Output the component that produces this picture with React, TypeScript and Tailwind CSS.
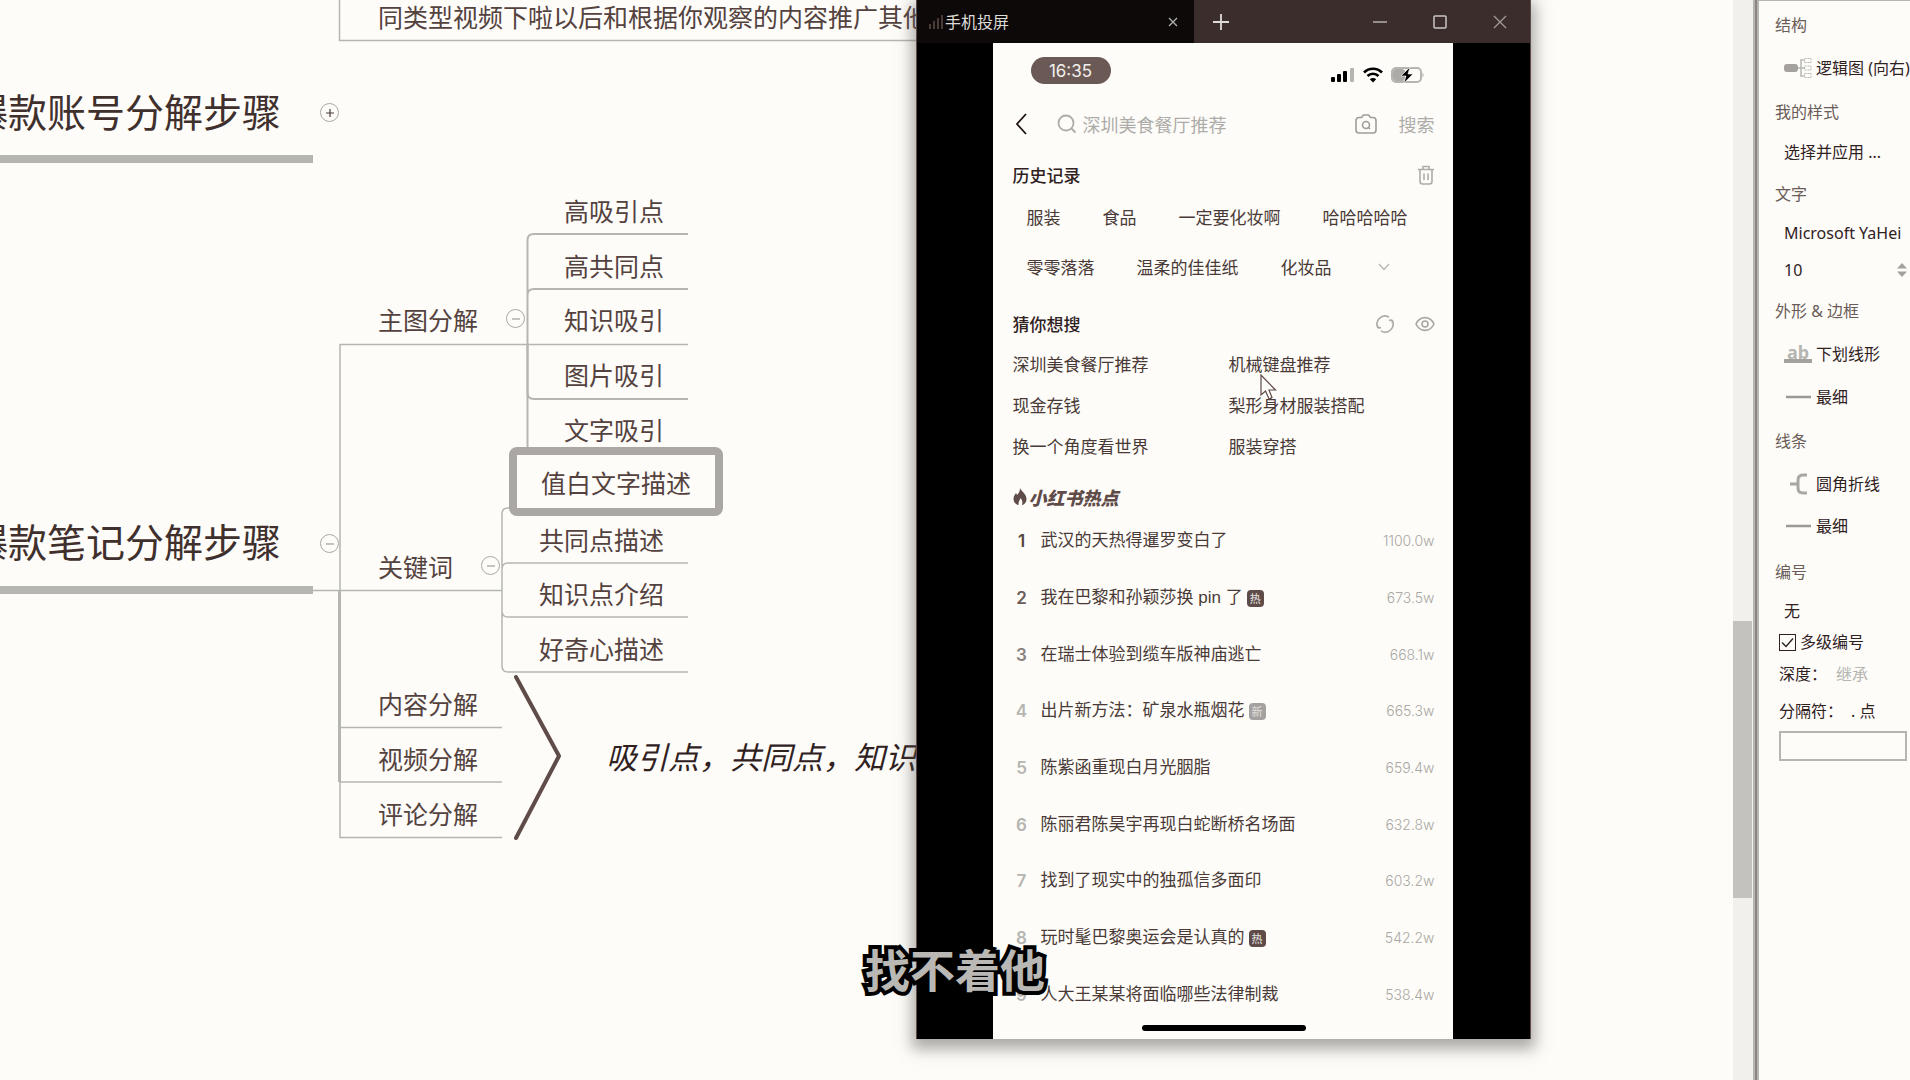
import React from "react";

type NodeItem = { text: string; pos: string };

const branchNodes: NodeItem[] = [
  { text: "主图分解", pos: "left-[378px] top-[302px]" },
  { text: "关键词", pos: "left-[378px] top-[549px]" },
  { text: "内容分解", pos: "left-[378px] top-[686px]" },
  { text: "视频分解", pos: "left-[378px] top-[741px]" },
  { text: "评论分解", pos: "left-[378px] top-[796px]" },
  { text: "高吸引点", pos: "left-[564px] top-[193px]" },
  { text: "高共同点", pos: "left-[564px] top-[248px]" },
  { text: "知识吸引", pos: "left-[564px] top-[302px]" },
  { text: "图片吸引", pos: "left-[564px] top-[357px]" },
  { text: "文字吸引", pos: "left-[564px] top-[412px]" },
  { text: "共同点描述", pos: "left-[539px] top-[522px]" },
  { text: "知识点介绍", pos: "left-[539px] top-[576px]" },
  { text: "好奇心描述", pos: "left-[539px] top-[631px]" },
];

function Toggle({ pos, open }: { pos: string; open: boolean }) {
  return (
    <button
      aria-label={open ? "收起" : "展开"}
      className={`absolute ${pos} flex size-[19px] items-center justify-center rounded-full border border-[#a9a8a5] bg-[#fdfcf8]`}
    >
      <svg viewBox="0 0 10 10" className="size-[10px]" stroke={open ? "#a09c99" : "#4a3a38"} strokeWidth="1.2">
        <path d={open ? "M1 5H9" : "M1 5H9M5 1V9"} />
      </svg>
    </button>
  );
}

function MindMap() {
  return (
    <div className="absolute inset-0 text-[25px] leading-[34px] whitespace-nowrap text-[#54423f]">
      <svg className="absolute left-0 top-0 h-[880px] w-[930px]" fill="none" stroke="#b5b5b2" strokeWidth="2">
        <path d="M339.500 0V40.500H930" strokeWidth="1.500" />
        <path d="M0 159H313M0 590H313" strokeWidth="8" />
        <path d="M313 590.500H502M340 590V344.500H688" strokeWidth="1.500" />
        <path d="M339.500 590V782" strokeWidth="3" />
        <path d="M340 727.500H502M340 782H502M340 782V837.500H502" strokeWidth="1.500" />
        <path d="M527.500 453V240Q527.500 234 534 234H688M527.500 344V295Q527.500 289 534 289H688" />
        <path d="M527.500 344V393Q527.500 399 534 399H688" />
        <path d="M502 590V514Q502 508 508 508H520M502 590V569Q502 563 508 563H688M502 590V611Q502 617 508 617H688M502 590V666Q502 672 508 672H688" strokeWidth="1.500" />
        <path d="M516 677L559 756L516 838" stroke="#5f4b48" strokeWidth="4" strokeLinecap="round" strokeLinejoin="round" />
      </svg>

      <div className="absolute left-[378px] top-[-1px]">同类型视频下啦以后和根据你观察的内容推广其他</div>
      <h2 className="absolute left-[-31px] top-[85px] text-[39px] leading-[50px] text-[#3f302e]">爆款账号分解步骤</h2>
      <h2 className="absolute left-[-31px] top-[515px] text-[39px] leading-[50px] text-[#3f302e]">爆款笔记分解步骤</h2>

      {branchNodes.map((n) => (
        <div key={n.text} className={`absolute ${n.pos}`}>
          {n.text}
        </div>
      ))}
      <div className="absolute left-[509px] top-[447px] flex h-[69px] w-[214px] items-center justify-center rounded-lg border-8 border-[#aaa7a4] bg-[#fdfcf8]">
        值白文字描述
      </div>
      <div className="absolute left-[606px] top-[736px] text-[31px] leading-[40px] text-[#30211f] italic">吸引点，共同点，知识</div>

      <Toggle pos="left-[320px] top-[103px]" open={false} />
      <Toggle pos="left-[320px] top-[534px]" open />
      <Toggle pos="left-[506px] top-[309px]" open />
      <Toggle pos="left-[481px] top-[556px]" open />
    </div>
  );
}

const hotList = [
  { text: "武汉的天热得暹罗变白了", count: "1100.0w", rank: "text-[#55433f]" },
  { text: "我在巴黎和孙颖莎换 pin 了", count: "673.5w", rank: "text-[#6b5c59]", tag: "热", tagBg: "bg-[#5f4b48]" },
  { text: "在瑞士体验到缆车版神庙逃亡", count: "668.1w", rank: "text-[#8b827f]" },
  { text: "出片新方法：矿泉水瓶烟花", count: "665.3w", rank: "text-[#b5b5b2]", tag: "新", tagBg: "bg-[#a5a19e]" },
  { text: "陈紫函重现白月光胭脂", count: "659.4w", rank: "text-[#b5b5b2]" },
  { text: "陈丽君陈昊宇再现白蛇断桥名场面", count: "632.8w", rank: "text-[#b5b5b2]" },
  { text: "找到了现实中的独孤信多面印", count: "603.2w", rank: "text-[#b5b5b2]" },
  { text: "玩时髦巴黎奥运会是认真的", count: "542.2w", rank: "text-[#b5b5b2]", tag: "热", tagBg: "bg-[#5f4b48]" },
  { text: "人大王某某将面临哪些法律制裁", count: "538.4w", rank: "text-[#b5b5b2]" },
];

const guesses = ["深圳美食餐厅推荐", "机械键盘推荐", "现金存钱", "梨形身材服装搭配", "换一个角度看世界", "服装穿搭"];

function StatusBar() {
  return (
    <div className="flex h-[55px] items-center justify-between pr-2.5 pl-[18px]">
      <div className="flex h-[27px] w-20 items-center justify-center rounded-full bg-[#6b5956] font-['Inter'] text-[17px] text-[#f3f1ed]">16:35</div>
      <div className="flex items-center gap-2 pt-2">
        <svg viewBox="0 0 24 16" className="h-4 w-6">
          <rect x="0" y="10" width="4" height="5" rx="1" />
          <rect x="6" y="7" width="4" height="8" rx="1" />
          <rect x="12" y="4" width="4" height="11" rx="1" />
          <rect x="19" y="1" width="4" height="14" rx="1" fill="#b5b5b2" />
        </svg>
        <svg viewBox="0 0 20 16" className="h-4 w-5" fill="none" stroke="#000" strokeWidth="2.600">
          <path d="M1 5.500C6 .5 14 .5 19 5.500" />
          <path d="M4.500 9C7.500 6 12.500 6 15.500 9" />
          <path d="M10 15.500L6.800 12.200C8.500 10.600 11.500 10.600 13.200 12.200Z" fill="#000" stroke="none" />
        </svg>
        <svg viewBox="0 0 34 16" className="h-4 w-[34px]" fill="none">
          <rect x="1" y="1" width="29" height="14" rx="4" stroke="#b5b5b2" strokeWidth="2" />
          <rect x="2" y="2" width="12" height="12" rx="3" fill="#adaba8" />
          <path d="M31.500 5.500Q34 8 31.500 10.500Z" fill="#b5b5b2" />
          <path d="M19 0L10 9H15L13 16L22 7H17Z" fill="#000" stroke="#fdfcf8" strokeWidth=".6" />
        </svg>
      </div>
    </div>
  );
}

function Phone() {
  return (
    <div className="w-[460px] bg-[#fdfcf8] pr-[18px] pl-5 text-[17px] leading-6 whitespace-nowrap text-[#4a3a37]">
      <StatusBar />

      <div className="flex h-[52px] items-center text-[18px] text-[#adacaa]">
        <button aria-label="返回" className="ml-0.5 w-[42px]">
          <svg viewBox="0 0 12 22" className="h-[22px] w-3" fill="none" stroke="#1d1211" strokeWidth="1.800">
            <path d="M11 1L2 11L11 21" />
          </svg>
        </button>
        <svg viewBox="0 0 20 20" className="size-5" fill="none" stroke="#adacaa" strokeWidth="1.800">
          <circle cx="9" cy="9" r="7.500" />
          <path d="M14.500 14.500L18.500 18.500" />
        </svg>
        <input aria-label="搜索内容" placeholder="深圳美食餐厅推荐" className="ml-1.5 min-w-0 flex-1 bg-transparent outline-none placeholder:text-[#adacaa]" />
        <button aria-label="拍照搜索" className="mr-[22px]">
          <svg viewBox="0 0 22 20" className="h-5 w-[22px]" fill="none" stroke="#a09c99" strokeWidth="1.600">
            <path d="M4 3.500H6.500L8.500 1H13.500L15.500 3.500H18Q21 3.500 21 6.500V16Q21 19 18 19H4Q1 19 1 16V6.500Q1 3.500 4 3.500Z" />
            <circle cx="11" cy="11" r="3.500" />
            <path d="M13 13L15 15" />
          </svg>
        </button>
        <button>搜索</button>
      </div>

      <div className="flex h-[50px] items-center justify-between">
        <h3 className="font-medium text-[#30211f]">历史记录</h3>
        <button aria-label="清空历史">
          <svg viewBox="0 0 18 20" className="h-5 w-[18px]" fill="none" stroke="#adacaa" strokeWidth="1.600">
            <path d="M1 4.500H17M6 4V1.500H12V4M3 4.500V16.500Q3 19 5.500 19H12.500Q15 19 15 16.500V4.500M7 8.500V15M11 8.500V15" />
          </svg>
        </button>
      </div>
      <div className="flex flex-col gap-4 pl-3.5">
        <div className="flex h-[34px] items-center gap-[42px]">
          {["服装", "食品", "一定要化妆啊", "哈哈哈哈哈"].map((t) => (
            <button key={t}>{t}</button>
          ))}
        </div>
        <div className="flex h-[34px] items-center gap-[42px]">
          {["零零落落", "温柔的佳佳纸", "化妆品"].map((t) => (
            <button key={t}>{t}</button>
          ))}
          <button aria-label="展开更多" className="pl-1">
            <svg viewBox="0 0 12 8" className="h-2 w-3" fill="none" stroke="#b5b5b2" strokeWidth="1.200">
              <path d="M1 1L6 6.500L11 1" />
            </svg>
          </button>
        </div>
      </div>

      <div className="mt-5 flex h-[39px] items-center justify-between">
        <h3 className="font-medium text-[#30211f]">猜你想搜</h3>
        <div className="flex items-center gap-[21px]">
          <button aria-label="换一批">
            <svg viewBox="0 0 18 18" className="size-[18px]" fill="none" stroke="#adacaa" strokeWidth="1.600">
              <path d="M13 2.200A8 8 0 0 0 2 13M5 15.900A8 8 0 0 0 16 5M2 13L1.500 10M2 13L5 12.600M16 5L16.500 8M16 5L13 5.400" />
            </svg>
          </button>
          <button aria-label="隐藏推荐">
            <svg viewBox="0 0 20 16" className="h-4 w-5" fill="none" stroke="#a9a6a4" strokeWidth="1.600">
              <path d="M1 8C5 -.5 15 -.5 19 8C15 16.500 5 16.500 1 8Z" />
              <circle cx="10" cy="8" r="3" />
            </svg>
          </button>
        </div>
      </div>
      <div className="grid grid-cols-[216px_1fr]">
        {guesses.map((g) => (
          <a key={g} href="#" className="flex h-[41px] items-center">
            {g}
          </a>
        ))}
      </div>

      <div className="mt-3.5 flex h-[33px] items-center gap-0.5 text-[#5f4b48]">
        <svg viewBox="0 0 14 17" className="h-[17px] w-3.5" fill="#5f4b48">
          <path d="M7 0C8 3 13.500 6 13.500 11C13.500 14.500 11 17 9 17C10 14 9 11.500 7.500 10C7 12 5.500 13 5.500 17C2.500 16.500 .5 14 .5 11C.5 8 2 6.500 3 5L4 7C6 5 7 3 7 0Z" />
        </svg>
        <h3 className="text-[18px] font-black italic">小红书热点</h3>
      </div>
      <ol className="flex h-[510px] flex-col">
        {hotList.map((h, i) => (
          <li key={h.text} className="flex flex-1 items-center">
            <span className={`w-[18px] text-center font-['Inter'] font-semibold ${h.rank}`}>{i + 1}</span>
            <a href="#" className="ml-2.5 font-['Liberation_Sans','Noto_Sans_CJK_SC',sans-serif]">
              {h.text}
            </a>
            {h.tag && <span className={`ml-1 flex size-[17px] items-center justify-center rounded ${h.tagBg} text-[11px] leading-4 font-medium text-[#d8d6d2]`}>{h.tag}</span>}
            <span className="ml-auto font-['Inter'] text-[14px] font-light text-[#a9a8a5]">{h.count}</span>
          </li>
        ))}
      </ol>
      <div className="flex h-4 justify-center pt-0.5">
        <div className="h-1.5 w-[164px] rounded-full bg-black" />
      </div>
    </div>
  );
}

function CastWindow() {
  return (
    <div className="absolute left-[916px] top-0 w-[615px] border-x border-[#5f4b48] bg-black shadow-[0_6px_14px_4px_rgba(90,85,82,0.5)]">
      <div className="flex h-[43px] items-center bg-[#3b2d2c] text-[#dedcd8]">
        <div className="flex h-full w-[277px] items-center bg-[#0d0908] pr-4 pl-3">
          <svg viewBox="0 0 14 14" className="size-3.5" stroke="#5f4b48" strokeWidth="1.500">
            <path d="M1 9V14M5 6V14M9 3V14M13 0V14" />
          </svg>
          <span className="ml-0.5 flex-1 text-[16px] leading-5 pb-0.5">手机投屏</span>
          <button aria-label="关闭标签">
            <svg viewBox="0 0 10 10" className="size-2.5" stroke="#b5b5b2" strokeWidth="1.200">
              <path d="M1 1L9 9M9 1L1 9" />
            </svg>
          </button>
        </div>
        <button aria-label="新建标签" className="ml-[19px] flex-1">
          <svg viewBox="0 0 16 16" className="size-4" stroke="#dedcd8" strokeWidth="1.800">
            <path d="M8 0V16M0 8H16" />
          </svg>
        </button>
        <div className="flex gap-[46px] pr-[23px]">
          <button aria-label="最小化">
            <svg viewBox="0 0 14 14" className="size-3.5" stroke="#c9c7c3" strokeWidth="1.300">
              <path d="M0 7H14" />
            </svg>
          </button>
          <button aria-label="最大化">
            <svg viewBox="0 0 14 14" className="size-3.5" fill="none" stroke="#c9c7c3" strokeWidth="1.500">
              <rect x="1" y="1" width="12" height="12" rx="1" />
            </svg>
          </button>
          <button aria-label="关闭">
            <svg viewBox="0 0 14 14" className="size-3.5" stroke="#a09a97" strokeWidth="1.300">
              <path d="M1 1L13 13M13 1L1 13" />
            </svg>
          </button>
        </div>
      </div>
      <div className="flex justify-center pr-0.5">
        <Phone />
      </div>
      <svg viewBox="0 0 17 26" className="absolute left-[343px] top-[374px] h-[26px] w-[17px]" fill="#fdfcf8" stroke="#5f4b48" strokeWidth="1.200">
        <path d="M1 1V21L5.500 17L9 25L12 23.500L9 16H15.500Z" />
      </svg>
    </div>
  );
}

const selectStyle = "min-w-0 flex-1 appearance-none overflow-hidden bg-transparent text-[#30211f] outline-none";

function LineIcon() {
  return (
    <svg viewBox="0 0 28 8" className="mr-1 h-2 w-7" stroke="#9d9895" strokeWidth="2.500">
      <path d="M2 4H27" />
    </svg>
  );
}

function Heading({ h, children }: { h: string; children: React.ReactNode }) {
  return <h4 className={`flex ${h} items-center pl-4 text-[#6b5c59]`}>{children}</h4>;
}

function FormatPanel() {
  return (
    <aside className="w-[151px] shrink-0 overflow-hidden border-t border-[#b5b5b2] bg-[#fdfcf8] pt-1 font-['Noto_Sans','Noto_Sans_CJK_SC',sans-serif] text-[16px] leading-6 whitespace-nowrap text-[#30211f]">
      <Heading h="h-10">结构</Heading>
      <div className="flex h-[46px] items-center pl-[25px]">
        <svg viewBox="0 0 28 22" className="mr-1 h-[22px] w-7" fill="none" stroke="#b5b5b2">
          <rect x="0" y="7" width="14" height="8" rx="3" fill="#a5a19e" stroke="none" />
          <path d="M14 11H20M20 3H17V19H20" strokeWidth="1.500" />
          <path d="M20.500 1.500H27V5.500H20.500ZM20.500 9H27V13H20.500ZM20.500 16.500H27V20.500H20.500Z" strokeDasharray="2 1" />
        </svg>
        <select aria-label="结构" className={selectStyle}>
          <option>逻辑图 (向右)</option>
        </select>
      </div>
      <Heading h="h-[42px]">我的样式</Heading>
      <div className="flex h-[38px] items-center pl-[25px]">
        <select aria-label="我的样式" className={selectStyle}>
          <option>选择并应用 ...</option>
        </select>
      </div>
      <Heading h="h-[46px]">文字</Heading>
      <div className="flex h-8 items-center pl-[25px]">
        <select aria-label="字体" className={selectStyle}>
          <option>Microsoft YaHei</option>
        </select>
      </div>
      <div className="flex h-[42px] items-center pr-[3px] pl-[25px]">
        <input aria-label="字号" defaultValue="10" className="min-w-0 flex-1 bg-transparent outline-none" />
        <button aria-label="调整字号">
          <svg viewBox="0 0 10 14" className="h-3.5 w-2.5" fill="#a5a19e">
            <path d="M5 0L10 5.500H0ZM0 8.500H10L5 14Z" />
          </svg>
        </button>
      </div>
      <Heading h="h-10">外形 &amp; 边框</Heading>
      <div className="flex h-[46px] items-center pl-[25px]">
        <span className="mr-1 flex h-[18px] w-7 items-center justify-center border-b-4 border-[#a5a19e] text-[18px] leading-4 font-bold text-[#b5b5b2]">ab</span>
        <select aria-label="外形" className={selectStyle}>
          <option>下划线形</option>
        </select>
      </div>
      <div className="flex h-10 items-center pl-[25px]">
        <LineIcon />
        <select aria-label="边框粗细" className={selectStyle}>
          <option>最细</option>
        </select>
      </div>
      <Heading h="h-12">线条</Heading>
      <div className="flex h-[38px] items-center pl-[25px]">
        <svg viewBox="0 0 28 22" className="mr-1 h-[22px] w-7" fill="none" stroke="#a9a6a3" strokeWidth="3">
          <path d="M23 2H19Q14 2 14 7V15Q14 20 19 20H23M6 11H14" />
        </svg>
        <select aria-label="线条形状" className={selectStyle}>
          <option>圆角折线</option>
        </select>
      </div>
      <div className="flex h-[46px] items-center pl-[25px]">
        <LineIcon />
        <select aria-label="线条粗细" className={selectStyle}>
          <option>最细</option>
        </select>
      </div>
      <Heading h="h-[46px]">编号</Heading>
      <div className="flex h-8 items-center pl-[25px]">
        <select aria-label="编号" className={selectStyle}>
          <option>无</option>
        </select>
      </div>
      <label className="flex h-[30px] items-center pl-5">
        <span className="relative mr-1 flex size-[17px]">
          <input type="checkbox" defaultChecked className="peer size-[17px] appearance-none border border-[#30211f]" />
          <svg viewBox="0 0 17 17" className="pointer-events-none absolute inset-0 hidden peer-checked:block" fill="none" stroke="#30211f" strokeWidth="1.400">
            <path d="M3 8.500L7 12.500L14 4.500" />
          </svg>
        </span>
        多级编号
      </label>
      <div className="flex h-[34px] items-center pl-5">
        <label htmlFor="depth" className="w-[57px]">
          深度：
        </label>
        <select id="depth" disabled className="appearance-none bg-transparent text-[#b5b5b2] opacity-100">
          <option>继承</option>
        </select>
      </div>
      <div className="flex h-10 items-center pl-5">
        <label htmlFor="separator" className="w-[72px]">
          分隔符：
        </label>
        <select id="separator" className="appearance-none bg-transparent">
          <option>. 点</option>
        </select>
      </div>
      <input aria-label="自定义编号" className="ml-5 h-[30px] w-32 border-2 border-[#b5b5b2] bg-transparent px-1 outline-none" />
    </aside>
  );
}

export default function App() {
  return (
    <div className="flex h-screen overflow-hidden bg-[#fdfcf8] font-['Noto_Sans_CJK_SC',sans-serif]">
      <main className="relative min-w-0 flex-1 overflow-hidden">
        <MindMap />
        <CastWindow />
        <div className="absolute left-[865px] top-[936px] text-[45px] leading-[66px] font-bold text-[#b9b8b5] [-webkit-text-stroke:8px_#000] [paint-order:stroke_fill]">找不着他</div>
      </main>
      <div className="flex w-5 shrink-0 flex-col bg-[#f1f0ec] pr-px">
        <div className="mt-[621px] h-[277px] bg-[#c3c2bf]" />
      </div>
      <div className="w-1.5 shrink-0 border-x-2 border-[#b5b5b2] bg-[#8b8481]" />
      <FormatPanel />
    </div>
  );
}
